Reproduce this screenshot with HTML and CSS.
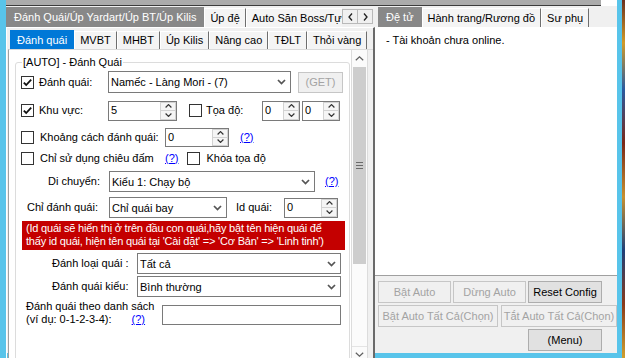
FILE: index.html
```html
<!DOCTYPE html>
<html lang="vi">
<head>
<meta charset="utf-8">
<title>Auto</title>
<link rel="stylesheet" href="styles.css">
</head>
<body>
<div class="desktop">
  <div class="edge-left"></div>
  <div class="window">
    <div class="topbar"><div class="tb-gray"></div><div class="tb-white"></div></div>
    <div class="content">
      <div class="left-pane">
        <div class="tabrow-main">
          <div class="tabs-clip">
            <div class="tab sel-gray">Đánh Quái/Úp Yardart/Úp BT/Úp Kilis</div>
            <div class="tab">Úp đệ</div>
            <div class="tab clipped">Auto Săn Boss/Tự động</div>
          </div>
          <div class="tab-scroll">
            <div class="ts-btn"><svg width="5" height="8" viewBox="0 0 5 8"><path d="M4 0.5 L1 4 L4 7.5" fill="none" stroke="#222" stroke-width="1.3"/></svg></div>
            <div class="ts-btn"><svg width="5" height="8" viewBox="0 0 5 8"><path d="M1 0.5 L4 4 L1 7.5" fill="none" stroke="#222" stroke-width="1.3"/></svg></div>
          </div>
        </div>
        <div class="main-page">
          <div class="inner-tabs">
            <div class="tab sel-blue">Đánh quái</div>
            <div class="tab">MVBT</div>
            <div class="tab">MHBT</div>
            <div class="tab">Úp Kilis</div>
            <div class="tab">Nâng cao</div>
            <div class="tab">TĐLT</div>
            <div class="tab">Thỏi vàng</div>
          </div>
          <div class="inner-page">
            <div class="scroll-area">
              <div class="group">
                <div class="group-title">[AUTO] - Đánh Quái</div>

                <div class="row r1">
                  <div class="chk on ml5"><svg width="11" height="11" viewBox="0 0 11 11"><path d="M1.8 5.6 L4.2 8 L9.2 2.6" fill="none" stroke="#111" stroke-width="1.8"/></svg></div>
                  <div class="lbl ml5 w69">Đánh quái:</div>
                  <div class="combo w183"><span class="combo-text">Namếc - Làng Mori - (7)</span><svg class="dd" width="9" height="6" viewBox="0 0 9 6"><path d="M1 1 L4.5 4.6 L8 1" fill="none" stroke="#555" stroke-width="1.7"/></svg></div>
                  <div class="btn dis get">(GET)</div>
                </div>

                <div class="row r2">
                  <div class="chk on ml5"><svg width="11" height="11" viewBox="0 0 11 11"><path d="M1.8 5.6 L4.2 8 L9.2 2.6" fill="none" stroke="#111" stroke-width="1.8"/></svg></div>
                  <div class="lbl ml5 w69">Khu vực:</div>
                  <div class="num w69"><span class="num-val">5</span><span class="spin"><span class="spin-b"><svg width="7" height="4" viewBox="0 0 7 4"><path d="M0.6 3.5 L3.5 0.6 L6.4 3.5" fill="none" stroke="#333" stroke-width="1.2"/></svg></span><span class="spin-b"><svg width="7" height="4" viewBox="0 0 7 4"><path d="M0.6 0.5 L3.5 3.4 L6.4 0.5" fill="none" stroke="#333" stroke-width="1.2"/></svg></span></span></div>
                  <div class="chk ml12"></div>
                  <div class="lbl ml4 w56">Tọa độ:</div>
                  <div class="num w38"><span class="num-val">0</span><span class="spin"><span class="spin-b"><svg width="7" height="4" viewBox="0 0 7 4"><path d="M0.6 3.5 L3.5 0.6 L6.4 3.5" fill="none" stroke="#333" stroke-width="1.2"/></svg></span><span class="spin-b"><svg width="7" height="4" viewBox="0 0 7 4"><path d="M0.6 0.5 L3.5 3.4 L6.4 0.5" fill="none" stroke="#333" stroke-width="1.2"/></svg></span></span></div>
                  <div class="num w38 ml2"><span class="num-val">0</span><span class="spin"><span class="spin-b"><svg width="7" height="4" viewBox="0 0 7 4"><path d="M0.6 3.5 L3.5 0.6 L6.4 3.5" fill="none" stroke="#333" stroke-width="1.2"/></svg></span><span class="spin-b"><svg width="7" height="4" viewBox="0 0 7 4"><path d="M0.6 0.5 L3.5 3.4 L6.4 0.5" fill="none" stroke="#333" stroke-width="1.2"/></svg></span></span></div>
                </div>

                <div class="row r3">
                  <div class="chk ml5"></div>
                  <div class="lbl ml6 w125">Khoảng cách đánh quái:</div>
                  <div class="num w64 h19"><span class="num-val">0</span><span class="spin"><span class="spin-b"><svg width="7" height="4" viewBox="0 0 7 4"><path d="M0.6 3.5 L3.5 0.6 L6.4 3.5" fill="none" stroke="#333" stroke-width="1.2"/></svg></span><span class="spin-b"><svg width="7" height="4" viewBox="0 0 7 4"><path d="M0.6 0.5 L3.5 3.4 L6.4 0.5" fill="none" stroke="#333" stroke-width="1.2"/></svg></span></span></div>
                  <a class="help ml11">(?)</a>
                </div>

                <div class="row r4">
                  <div class="chk ml5"></div>
                  <div class="lbl ml6 w125">Chỉ sử dụng chiêu đấm</div>
                  <a class="help">(?)</a>
                  <div class="chk ml9"></div>
                  <div class="lbl ml6">Khóa tọa độ</div>
                </div>

                <div class="row r5">
                  <div class="lbl ml32 w61">Di chuyển:</div>
                  <div class="combo w206 h21"><span class="combo-text">Kiểu 1: Chạy bộ</span><svg class="dd" width="9" height="6" viewBox="0 0 9 6"><path d="M1 1 L4.5 4.6 L8 1" fill="none" stroke="#555" stroke-width="1.7"/></svg></div>
                  <a class="help ml10">(?)</a>
                </div>

                <div class="row r6">
                  <div class="lbl ml11 w82">Chỉ đánh quái:</div>
                  <div class="combo w118 h21"><span class="combo-text">Chỉ quái bay</span><svg class="dd" width="9" height="6" viewBox="0 0 9 6"><path d="M1 1 L4.5 4.6 L8 1" fill="none" stroke="#555" stroke-width="1.7"/></svg></div>
                  <div class="lbl ml9 w48">Id quái:</div>
                  <div class="num w54"><span class="num-val">0</span><span class="spin"><span class="spin-b"><svg width="7" height="4" viewBox="0 0 7 4"><path d="M0.6 3.5 L3.5 0.6 L6.4 3.5" fill="none" stroke="#333" stroke-width="1.2"/></svg></span><span class="spin-b"><svg width="7" height="4" viewBox="0 0 7 4"><path d="M0.6 0.5 L3.5 3.4 L6.4 0.5" fill="none" stroke="#333" stroke-width="1.2"/></svg></span></span></div>
                </div>

                <div class="warn">(Id quái sẽ hiển thị ở trên đầu con quái,hãy bật tên hiện quái để<br>thấy id quái, hiện tên quái tại 'Cài đặt' =&gt; 'Cơ Bản' =&gt; 'Linh tinh')</div>

                <div class="row r7">
                  <div class="lbl ml36 w85">Đánh loại quái :</div>
                  <div class="combo w204 h21"><span class="combo-text">Tất cả</span><svg class="dd" width="9" height="6" viewBox="0 0 9 6"><path d="M1 1 L4.5 4.6 L8 1" fill="none" stroke="#555" stroke-width="1.7"/></svg></div>
                </div>

                <div class="row r8">
                  <div class="lbl ml36 w85">Đánh quái kiểu:</div>
                  <div class="combo w204 h21"><span class="combo-text">Bình thường</span><svg class="dd" width="9" height="6" viewBox="0 0 9 6"><path d="M1 1 L4.5 4.6 L8 1" fill="none" stroke="#555" stroke-width="1.7"/></svg></div>
                </div>

                <div class="row r9">
                  <div class="lbl2 ml10 w136">Đánh quái theo danh sách<br>(ví dụ: 0-1-2-3-4):<a class="help ml20">(?)</a></div>
                  <div class="textbox w179"></div>
                </div>
              </div>
            </div>
            <div class="vscroll">
              <div class="sb-btn up"><svg width="9" height="5" viewBox="0 0 9 5"><path d="M0.8 4.3 L4.5 0.8 L8.2 4.3" fill="none" stroke="#606060" stroke-width="1.2"/></svg></div>
              <div class="sb-thumb"><span class="grip"></span><span class="grip"></span><span class="grip"></span></div>
              <div class="sb-track"></div>
              <div class="sb-btn down"><svg width="9" height="5" viewBox="0 0 9 5"><path d="M0.8 0.7 L4.5 4.2 L8.2 0.7" fill="none" stroke="#606060" stroke-width="1.2"/></svg></div>
            </div>
          </div>
        </div>
      </div>

      <div class="right-pane">
        <div class="rp-tabs">
          <div class="tab sel-gray">Đệ tử</div>
          <div class="tab">Hành trang/Rương đồ</div>
          <div class="tab">Sư phụ</div>
        </div>
        <div class="rp-body">- Tài khoản chưa online.</div>
        <div class="rp-buttons">
          <div class="btn-row">
            <div class="btn dis w73">Bật Auto</div>
            <div class="btn dis w73">Dừng Auto</div>
            <div class="btn w74">Reset Config</div>
          </div>
          <div class="btn-row gap3">
            <div class="btn dis w120">Bật Auto Tất Cả(Chọn)</div>
            <div class="btn dis w116">Tắt Auto Tất Cả(Chọn)</div>
          </div>
          <div class="btn-row">
            <div class="btn w74 ml150">(Menu)</div>
          </div>
        </div>
      </div>
    </div>
  </div>
  <div class="edge-right"></div>
</div>
</body>
</html>
```

FILE: styles.css
```css
* { box-sizing: border-box; }
html, body { margin: 0; padding: 0; }
body {
  width: 625px; height: 358px; overflow: hidden;
  font-family: "Liberation Sans", Arial, sans-serif;
  font-size: 11px; color: #000;
  background: #58c4ea;
}
.desktop { display: flex; width: 625px; height: 358px; background: #58c4ea; }
.edge-left { width: 6px; flex: none; }
.edge-right {
  width: 8px; flex: none;
  background:
    linear-gradient(90deg, #58c4ea 0 5px, transparent 5px),
    linear-gradient(180deg, #6a3020 0%, #d29a28 12%, #2a5aa0 25%, #7a2818 40%, #c89030 55%, #1f3f78 70%, #8a3a1a 85%, #d0a030 100%);
}
.window {
  width: 611px; height: 353px; flex: none;
  display: flex; flex-direction: column;
  background: #f0f0f0;
}
.topbar { display: flex; height: 6px; flex: none; }
.tb-gray { flex: 1; background: #ababab; border-bottom: 1px solid #3c3c3c; }
.tb-white { width: 16px; background: #fff; }

.content { display: flex; flex: 1; padding-top: 1px; }

/* ---------- tabs ---------- */
.tab {
  flex: none; height: 19px; line-height: 18px;
  padding: 0 5px; white-space: nowrap;
  background: #f4f4f4;
  border-top: 1px solid #fff; border-left: 1px solid #fff;
  border-right: 1px solid #6e6e6e;
}
.tab.sel-gray {
  height: 20px; line-height: 19px; padding: 0 7px;
  background: #888; color: #fff; border-color: #888;
}
.tab.sel-blue {
  padding: 0 6px;
  background: #0078d7; color: #fff; border-color: #0078d7;
}
.tab.clipped { width: 98px; overflow: hidden; border-right: none; }

.left-pane {
  width: 369px; height: 327px; flex: none;
  display: flex; flex-direction: column;
}
.tabrow-main { display: flex; height: 20px; flex: none; }
.tabs-clip {
  display: flex; align-items: flex-end;
  width: 336px; height: 20px; overflow: hidden; flex: none;
}
.tab-scroll { display: flex; padding-top: 2px; }
.ts-btn {
  width: 16px; height: 15px;
  display: flex; align-items: center; justify-content: center;
  background: #f0f0f0; border: 1px solid #b9b9b9;
}
.ts-btn + .ts-btn { width: 15px; border-left: none; }

.main-page {
  flex: 1; display: flex; flex-direction: column;
  border-top: 1px solid #fff; border-left: 1px solid #fff;
  border-right: 2px solid #6a6a6a; border-bottom: 2px solid #6a6a6a;
  padding: 2px 0 0 1px;
}
.inner-tabs {
  display: flex; align-items: flex-end;
  height: 19px; flex: none; padding-left: 2px;
}
.inner-tabs .tab { height: 18px; line-height: 17px; }
.inner-tabs .tab.sel-blue { height: 19px; line-height: 18px; }

.inner-page {
  flex: 1; display: flex; min-height: 0;
  border-left: 1px solid #a0a0a0; border-top: 1px solid #dadada;
  background: #f0f0f0;
}
.scroll-area {
  width: 342px; flex: none; overflow: hidden;
  background: #fff; padding: 12px 0 0 6px;
}

/* scrollbar */
.vscroll {
  width: 17px; flex: none; display: flex; flex-direction: column;
  background: #fbfbfb;
  border-left: 1px solid #dcdcdc; border-right: 1px solid #dcdcdc;
}
.sb-btn { display: flex; align-items: center; justify-content: center; flex: none; }
.sb-btn.up { height: 17px; }
.sb-btn.down { height: 16px; border-top: 1px solid #e4e4e4; }
.sb-thumb {
  height: 197px; flex: none; margin: 0 1px;
  background: #cdcdcd;
  display: flex; flex-direction: column; align-items: center; justify-content: center;
  gap: 2px;
}
.grip { width: 7px; height: 1px; background: #6a6a6a; }
.sb-track { flex: 1; }

/* group box */
.group {
  width: 335px; height: 300px;
  border: 1px solid #dcdcdc; border-radius: 3px;
}
.group-title {
  margin: -8px 0 0 6px; padding: 0 1px;
  width: max-content; background: #fff; line-height: 14px;
}
.row { display: flex; align-items: center; }
.r1 { margin-top: 1px; height: 24px; }
.r2 { margin-top: 6px; height: 21px; }
.r3 { margin-top: 6px; height: 20px; }
.r4 { margin-top: 4px; height: 14px; }
.r5 { margin-top: 6px; height: 21px; }
.r6 { margin-top: 5px; height: 21px; }
.r7 { margin-top: 3px; height: 21px; }
.r8 { margin-top: 2px; height: 21px; }
.r9 { margin-top: 3px; height: 27px; align-items: flex-start; }

.lbl { flex: none; white-space: nowrap; line-height: 13px; }
.lbl2 { flex: none; white-space: nowrap; line-height: 13px; }

.chk {
  width: 13px; height: 13px; flex: none;
  border: 1px solid #333; background: #fff;
  display: flex; align-items: center; justify-content: center;
}

.combo {
  flex: none; height: 22px; display: flex; align-items: center;
  border: 1px solid #7a7a7a; background: #fff;
  padding: 0 4px 0 2px;
}
.combo.h21 { height: 21px; }
.combo-text { flex: 1; white-space: nowrap; overflow: hidden; }
.dd { flex: none; }

.num {
  flex: none; height: 20px; display: flex;
  border: 1px solid #7a7a7a; background: #fff;
}
.num.h19 { height: 19px; }
.num-val { flex: 1; padding-left: 2px; line-height: 17px; }
.spin { width: 16px; flex: none; display: flex; flex-direction: column; }
.spin-b {
  flex: 1; display: flex; align-items: center; justify-content: center;
  background: #f5f5f5; border: 1px solid #d2d2d2;
}
.spin-b + .spin-b { border-top: none; }

.help { color: #0000ff; text-decoration: underline; flex: none; line-height: 13px; }

.warn {
  margin: 3px 0 0 6px; width: 323px; height: 29px;
  background: #c40000; color: #fff;
  padding: 1px 0 0 4px; line-height: 13px;
  letter-spacing: -0.2px;
  white-space: nowrap; overflow: hidden;
}

.textbox {
  flex: none; height: 20px; margin-top: 5px;
  border: 1px solid #7a7a7a; background: #fff;
}

/* buttons */
.btn {
  flex: none; height: 22px;
  display: flex; align-items: center; justify-content: center;
  white-space: nowrap;
  background: #e1e1e1; border: 1px solid #adadad;
}
.btn.dis { background: #f0f0f0; border-color: #c6c6c6; color: #a3a3a3; }
.btn.get { width: 45px; height: 21px; margin-left: 7px; }

/* right pane */
.right-pane {
  width: 242px; flex: none; overflow: hidden;
  display: flex; flex-direction: column;
}
.rp-tabs {
  display: flex; align-items: flex-end;
  height: 20px; flex: none; padding-left: 3px;
}
.rp-body {
  height: 249px; flex: none;
  background: #fff; border-bottom: 1px solid #a0a0a0;
  padding: 7px 0 0 11px; line-height: 13px;
}
.rp-buttons { display: flex; flex-direction: column; gap: 2px; padding: 5px 0 0 3px; }
.btn-row { display: flex; gap: 2px; }
.btn-row.gap3 { gap: 3px; }

/* sizes & offsets */
.ml2 { margin-left: 2px; } .ml4 { margin-left: 4px; } .ml5 { margin-left: 5px; }
.ml6 { margin-left: 6px; } .ml9 { margin-left: 9px; } .ml10 { margin-left: 10px; }
.ml11 { margin-left: 11px; } .ml12 { margin-left: 12px; } .ml20 { margin-left: 20px; }
.ml32 { margin-left: 32px; } .ml36 { margin-left: 36px; } .ml150 { margin-left: 150px; }
.w38 { width: 38px; } .w48 { width: 48px; } .w54 { width: 54px; } .w56 { width: 56px; }
.w61 { width: 61px; } .w64 { width: 64px; } .w69 { width: 69px; } .w73 { width: 73px; }
.w74 { width: 74px; } .w82 { width: 82px; } .w85 { width: 85px; } .w116 { width: 116px; }
.w118 { width: 118px; } .w120 { width: 120px; } .w125 { width: 125px; } .w136 { width: 136px; }
.w179 { width: 179px; } .w183 { width: 183px; } .w204 { width: 204px; } .w206 { width: 206px; }
```
